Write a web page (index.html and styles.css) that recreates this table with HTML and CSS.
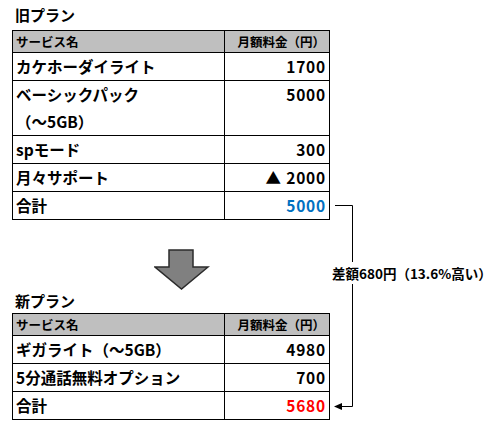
FILE: index.html
```html
<!DOCTYPE html>
<html lang="ja">
<head>
<meta charset="utf-8">
<link rel="stylesheet" href="styles.css">
</head>
<body>
<div class="page">
  <div class="title t1">旧プラン</div>
  <table class="plan">
    <tr class="head"><th class="name">サービス名</th><th class="price">月額料金（円）</th></tr>
    <tr><td>カケホーダイライト</td><td class="num">1700</td></tr>
    <tr><td>ベーシックパック<br>（～5GB）</td><td class="num">5000</td></tr>
    <tr><td>spモード</td><td class="num">300</td></tr>
    <tr><td>月々サポート</td><td class="num">▲ 2000</td></tr>
    <tr><td>合計</td><td class="num blue">5000</td></tr>
  </table>
  <svg class="down" width="56" height="42" viewBox="0 0 56 42">
    <polygon points="15,1 39,1 39,18 54,18 27.5,40 1,18 15,18" fill="#808080" stroke="#2b2b2b" stroke-width="1.5" stroke-linejoin="miter"/>
  </svg>
  <div class="title t2">新プラン</div>
  <table class="plan">
    <tr class="head"><th class="name">サービス名</th><th class="price">月額料金（円）</th></tr>
    <tr><td>ギガライト（～5GB）</td><td class="num">4980</td></tr>
    <tr><td>5分通話無料オプション</td><td class="num">700</td></tr>
    <tr><td>合計</td><td class="num red">5680</td></tr>
  </table>
</div>
<svg class="connector" width="500" height="432" viewBox="0 0 500 432">
  <polyline points="335,205.5 352.5,205.5 352.5,262" fill="none" stroke="#000" stroke-width="1"/>
  <polyline points="352.5,284 352.5,406.5 341,406.5" fill="none" stroke="#000" stroke-width="1"/>
  <polygon points="334,406.5 342,403 342,410" fill="#000"/>
</svg>
<div class="diff">差額680円（13.6%高い）</div>
</body>
</html>
```

FILE: styles.css
```css
html, body {
  margin: 0;
  padding: 0;
  background: #fff;
}
body {
  font-family: "Noto Sans CJK JP", "Noto Sans", sans-serif;
  font-weight: bold;
  color: #000;
  width: 500px;
  height: 432px;
  position: relative;
  overflow: hidden;
}
.page {
  padding: 4px 0 0 12px;
  display: flex;
  flex-direction: column;
  align-items: flex-start;
}
.title {
  font-size: 15px;
  line-height: 22px;
  padding-left: 3px;
}
.t1 {
  margin-bottom: 4px;
}
.t2 {
  line-height: 20px;
  margin-bottom: 2px;
}
.plan {
  border-collapse: collapse;
  width: 318px;
  table-layout: fixed;
}
.plan th, .plan td {
  border: 1px solid #000;
  padding: 0 4px 0 3px;
  font-size: 15.5px;
  line-height: 27px;
  vertical-align: top;
  text-align: left;
  white-space: nowrap;
}
.plan .head th {
  background: #bfbfbf;
  font-size: 12.5px;
  line-height: 21px;
}
.plan th.name {
  width: 204px;
}
.plan th.price {
  text-align: right;
}
.plan td.num {
  text-align: right;
  letter-spacing: 0.8px;
  padding-right: 3px;
}
.blue {
  color: #0070c0;
}
.red {
  color: #ff0000;
}
.down {
  display: block;
  margin: 29px 0 0 142px;
}
.connector {
  position: absolute;
  left: 0;
  top: 0;
}
.diff {
  position: absolute;
  left: 332px;
  top: 263px;
  font-size: 13.5px;
  line-height: 20px;
  white-space: nowrap;
}
```
